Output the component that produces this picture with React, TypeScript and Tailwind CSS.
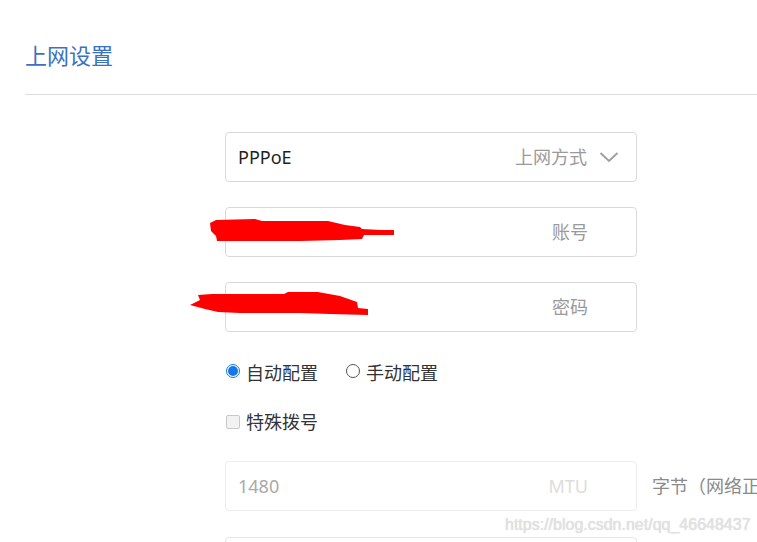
import React from "react";

const font = {
  fontFamily: '"Noto Sans", "Noto Sans CJK SC", sans-serif',
};

type FieldProps = {
  value?: string;
  hint: string;
  disabled?: boolean;
  select?: boolean;
};

const Field: React.FC<FieldProps> = ({ value, hint, disabled, select }) => (
  <div
    className={`flex h-[50px] w-[412px] shrink-0 items-center rounded-[4px] border pl-[12px] text-[18px] ${
      disabled ? "border-[#ececec]" : "border-[#d9d9d9]"
    } ${select ? "pr-[17px]" : "pr-[48px]"}`}
  >
    <span className={`flex-1 ${disabled ? "text-[#aaaaaa]" : "text-[#1f1f1f]"}`}>
      {value}
    </span>
    <span className={disabled ? "text-[#dddddd]" : "text-[#9a9a9a]"}>{hint}</span>
    {select && (
      <svg width="20" height="12" viewBox="0 0 20 12" className="ml-[12px]">
        <path d="M1.5 2 L10 10 L18.5 2" fill="none" stroke="#a0a0a0" strokeWidth="2" />
      </svg>
    )}
  </div>
);

export default function App() {
  return (
    <div className="relative h-[542px] w-full overflow-hidden bg-white" style={font}>
      <div className="ml-[25px] box-border h-[95px] border-b border-[#dcdcdc] pt-[40px]">
        <h1 className="text-[22px] leading-[30px] text-[#3a72bf]">上网设置</h1>
      </div>

      <div className="ml-[225px] mt-[37px] flex flex-col">
        <div className="flex flex-col gap-[25px]">
          <Field value="PPPoE" hint="上网方式" select />
          <Field hint="账号" />
          <Field hint="密码" />
        </div>

        <div className="mt-[26px] flex h-[26px] items-center text-[18px] text-[#333]">
          <span className="ml-[1px] flex h-[14px] w-[14px] items-center justify-center rounded-full border border-[#1677e6] bg-white">
            <span className="h-[10px] w-[10px] rounded-full bg-[#1677e6]" />
          </span>
          <span className="ml-[6px] mt-[4px]">自动配置</span>
          <span className="ml-[28px] h-[14px] w-[14px] rounded-full border border-[#555]" />
          <span className="ml-[6px] mt-[4px]">手动配置</span>
        </div>

        <div className="mt-[25px] flex h-[26px] items-center text-[18px] text-[#333]">
          <span className="ml-[1px] h-[14px] w-[14px] rounded-[2px] border border-[#c8c8c8] bg-[#f2f2f2]" />
          <span className="ml-[6px]">特殊拨号</span>
        </div>

        <div className="mt-[26px] flex items-center">
          <Field value="1480" hint="MTU" disabled />
          <span className="ml-[15px] whitespace-nowrap text-[18px] text-[#8a8a8a]">
            字节（网络正常情况下无需修改）
          </span>
        </div>

        <div className="mt-[26px] h-[50px] w-[412px] shrink-0 rounded-[4px] border border-[#e6e6e6]" />
      </div>

      <span
        className="absolute left-[505px] top-[513px] whitespace-nowrap text-[16px] text-[#e2e2e2]"
        style={{ fontFamily: '"Liberation Sans", Arial, sans-serif', textShadow: "0 0 1px #cfcfcf" }}
      >
        https://blog.csdn.net/qq_46648437
      </span>

      <svg className="pointer-events-none absolute left-0 top-0" width="757" height="542">
        <polygon
          fill="#ff0000"
          points="210,223 216,220 255,219 262,221 328,221 345,225 360,227 362,229 381,230 394,230 394,235 364,235 362,239 340,240 300,241 217,241 216,236 211,231"
        />
        <polygon
          fill="#ff0000"
          points="190,305 200,300 198,295 212,294 284,294 288,292 318,292 340,296 357,302 358,308 368,309 368,315 330,314 300,313 240,313 218,312 205,309"
        />
      </svg>
    </div>
  );
}
